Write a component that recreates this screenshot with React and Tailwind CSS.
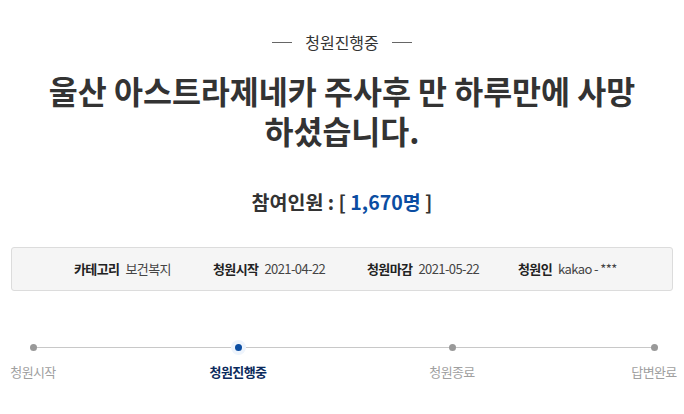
import React from "react";

const steps = [
  { label: "청원시작", active: false, ml: "ml-[3px]" },
  { label: "청원진행중", active: true, ml: "ml-[145px]" },
  { label: "청원종료", active: false, ml: "ml-[154px]" },
  { label: "답변완료", active: false, ml: "ml-[142px]" },
];

export default function App() {
  return (
    <div
      className="w-[684px] h-[414px] bg-white overflow-hidden text-[#333]"
      style={{ fontFamily: '"Noto Sans CJK KR", "Noto Sans", sans-serif' }}
    >
      <div className="pt-[32px] flex items-center justify-center gap-[13px]">
        <span className="block w-[20px] h-px bg-[#666]" />
        <span className="text-[16px] leading-[20px] text-[#333]">청원진행중</span>
        <span className="block w-[20px] h-px bg-[#666]" />
      </div>
      <h1 className="mt-[18px] text-center text-[31.5px] leading-[40px] font-bold text-[#333]">
        울산 아스트라제네카 주사후 만 하루만에 사망
        <br />
        하셨습니다.
      </h1>
      <div className="mt-[39px] text-center text-[19.5px] leading-[26px] font-bold text-[#333]">
        참여인원 : [ <span className="text-[#0b4da2]">1,670명</span> ]
      </div>
      <div className="mt-[32px] mx-[11px] h-[44px] rounded-[3px] border border-[#dcdcdc] bg-[#f5f5f5] flex items-center pl-[62px] text-[13px] tracking-[-0.6px]">
        <div className="flex items-center gap-[6px] w-[139px]">
          <span className="font-bold text-[#222]">카테고리</span>
          <span className="text-[#444]">보건복지</span>
        </div>
        <div className="flex items-center gap-[6px] w-[154px]">
          <span className="font-bold text-[#222]">청원시작</span>
          <span className="text-[#444]">2021-04-22</span>
        </div>
        <div className="flex items-center gap-[6px] w-[151px]">
          <span className="font-bold text-[#222]">청원마감</span>
          <span className="text-[#444]">2021-05-22</span>
        </div>
        <div className="flex items-center gap-[6px]">
          <span className="font-bold text-[#222]">청원인</span>
          <span className="text-[#444]">kakao - ***</span>
        </div>
      </div>
      <div className="mt-[49px] relative">
        <div className="absolute left-[33px] w-[621px] top-[7px] h-px bg-[#c8c8c8]" />
        <div className="relative flex">
          {steps.map((s) => (
            <div key={s.label} className={"w-[60px] flex flex-col items-center " + s.ml}>
              <div className="h-[15px] w-[15px] flex items-center justify-center">
                {s.active ? (
                  <div className="h-[15px] w-[15px] rounded-full bg-[#eef4fc] flex items-center justify-center">
                    <div className="h-[7px] w-[7px] rounded-full bg-[#0b4da2]" />
                  </div>
                ) : (
                  <div className="h-[7px] w-[7px] rounded-full bg-[#999]" />
                )}
              </div>
              <span
                className={
                  "mt-[8px] whitespace-nowrap text-[13px] leading-[18px] tracking-[-0.6px] " +
                  (s.active ? "font-bold text-[#0b2a5c]" : "text-[#a0a0a0]")
                }
              >
                {s.label}
              </span>
            </div>
          ))}
        </div>
      </div>
    </div>
  );
}
